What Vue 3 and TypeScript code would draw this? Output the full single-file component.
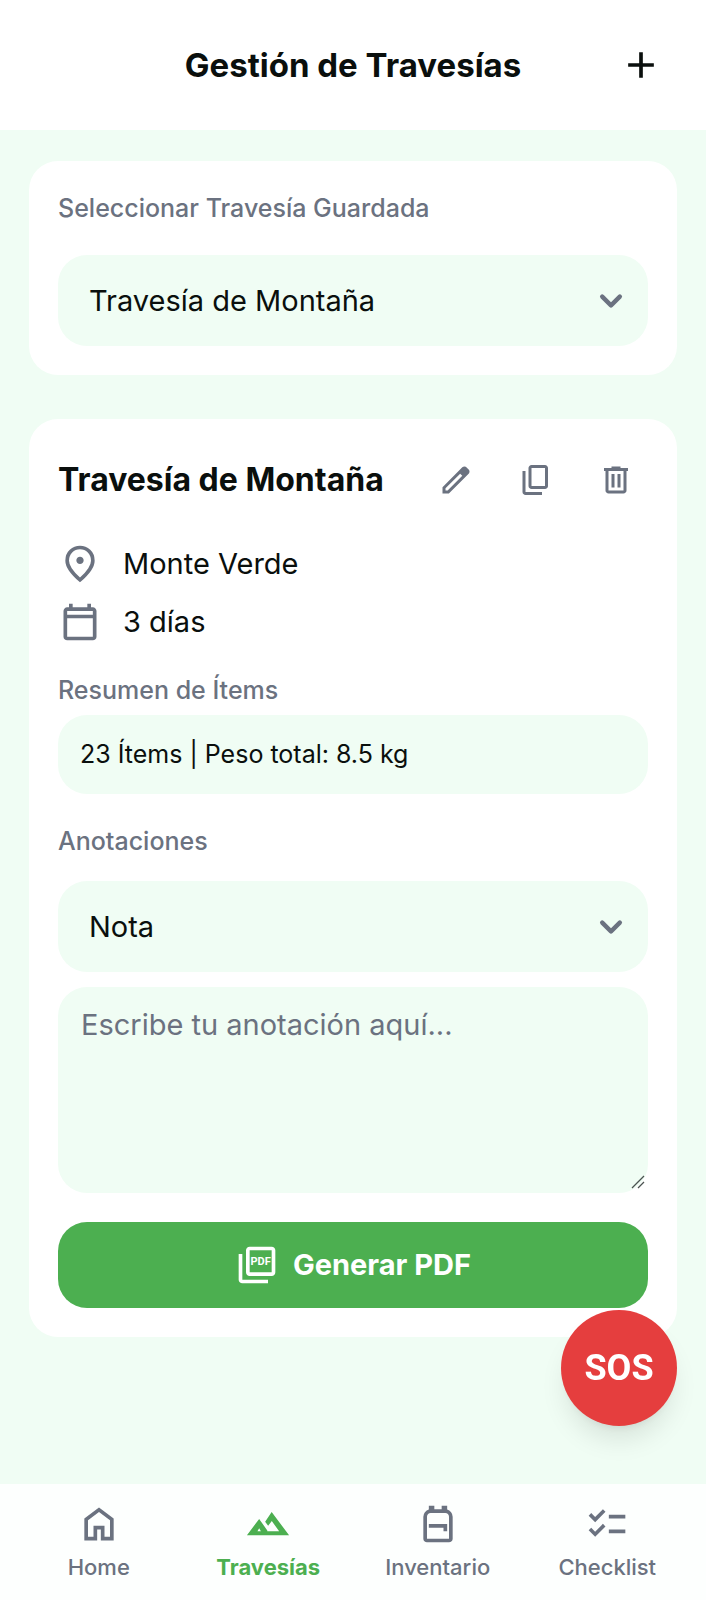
<script setup lang="ts">
import { ref } from 'vue'

interface NavItem {
  label: string
  active: boolean
  path: string
}

const trips: string[] = ['Travesía de Montaña', 'Travesía de Costa', 'Travesía de Bosque']
const noteTypes: string[] = ['Nota', 'Alerta', 'Recordatorio']

const selectedTrip = ref<string>(trips[0])
const noteType = ref<string>(noteTypes[0])
const note = ref<string>('')

const actions: { label: string; path: string }[] = [
  {
    label: 'Editar',
    path: 'M200-200h57l391-391-57-57-391 391v57Zm-80 80v-170l528-527q12-11 26.5-17t30.5-6q16 0 31 6t26 18l55 56q12 11 17.5 26t5.5 30q0 16-5.5 30.5T817-647L290-120H120Z',
  },
  {
    label: 'Duplicar',
    path: 'M360-240q-33 0-56.5-23.5T280-320v-480q0-33 23.5-56.5T360-880h360q33 0 56.5 23.5T800-800v480q0 33-23.5 56.5T720-240H360Zm0-80h360v-480H360v480ZM200-80q-33 0-56.5-23.5T120-160v-560h80v560h440v80H200Z',
  },
  {
    label: 'Eliminar',
    path: 'M280-120q-33 0-56.5-23.5T200-200v-520h-40v-80h200v-40h240v40h200v80h-40v520q0 33-23.5 56.5T680-120H280Zm400-600H280v520h400v-520ZM360-280h80v-360h-80v360Zm160 0h80v-360h-80v360Z',
  },
]

const navItems: NavItem[] = [
  {
    label: 'Home',
    active: false,
    path: 'M240-200h120v-240h240v240h120v-360L480-740 240-560v360Zm-80 80v-480l320-240 320 240v480H520v-240h-80v240H160Z',
  },
  {
    label: 'Travesías',
    active: true,
    path: 'M20-235 287-590 465-340V-320H723L563-545 483-440 418-531 560-740 940-235ZM250-320h75l-38-65Z',
  },
  {
    label: 'Inventario',
    active: false,
    path: 'M160-160v-480q0-56 34.5-98.5T280-794v-86h120v80h160v-80h120v86q51 13 85.5 55.5T800-640v480q0 33-23.5 56.5T720-80H240q-33 0-56.5-23.5T160-160Zm80 0h480v-480q0-33-23.5-56.5T640-720H320q-33 0-56.5 23.5T240-640v480Zm360-160h80v-160H280v80h320v80Z',
  },
  {
    label: 'Checklist',
    active: false,
    path: 'M222-200 80-342l56-56 85 85 170-170 56 57-225 226Zm0-320L80-662l56-56 85 85 170-170 56 57-225 226Zm298 240v-80h360v80H520Zm0-320v-80h360v80H520Z',
  },
]
</script>

<template>
  <div class="page">
    <header class="header">
      <h1 class="title">Gestión de Travesías</h1>
      <button class="add" type="button" aria-label="Nueva travesía">
        <svg class="icon" viewBox="0 -960 960 960" aria-hidden="true">
          <path d="M440-440H200v-80h240v-240h80v240h240v80H520v240h-80v-240Z" />
        </svg>
      </button>
    </header>

    <main class="main">
      <section class="card">
        <label class="label" for="trip">Seleccionar Travesía Guardada</label>
        <div class="field trip-select">
          <select id="trip" v-model="selectedTrip" class="select">
            <option v-for="t in trips" :key="t">{{ t }}</option>
          </select>
          <svg class="chevron" viewBox="0 0 20 20" aria-hidden="true">
            <path d="M5.293 7.293a1 1 0 011.414 0L10 10.586l3.293-3.293a1 1 0 111.414 1.414l-4 4a1 1 0 01-1.414 0l-4-4a1 1 0 010-1.414z" />
          </svg>
        </div>
      </section>

      <section class="card">
        <div class="trip-head">
          <h2 class="trip-title">{{ selectedTrip }}</h2>
          <div class="actions">
            <button v-for="a in actions" :key="a.label" class="action" type="button" :aria-label="a.label">
              <svg class="icon-small" viewBox="0 -960 960 960" aria-hidden="true"><path :d="a.path" /></svg>
            </button>
          </div>
        </div>

        <ul class="facts">
          <li class="fact">
            <svg class="icon muted" viewBox="0 -960 960 960" aria-hidden="true">
              <path d="M480-480q33 0 56.5-23.5T560-560q0-33-23.5-56.5T480-640q-33 0-56.5 23.5T400-560q0 33 23.5 56.5T480-480Zm0 294q122-112 181-203.5T720-552q0-109-69.5-178.5T480-800q-101 0-170.5 69.5T240-552q0 71 59 162.5T480-186Zm0 106Q319-217 239.5-334.5T160-552q0-150 96.5-239T480-880q127 0 223.5 89T800-552q0 100-79.5 217.5T480-80Z" />
            </svg>
            <span>Monte Verde</span>
          </li>
          <li class="fact">
            <svg class="icon muted" viewBox="0 -960 960 960" aria-hidden="true">
              <path d="M200-80q-33 0-56.5-23.5T120-160v-560q0-33 23.5-56.5T200-800h40v-80h80v80h320v-80h80v80h40q33 0 56.5 23.5T840-720v560q0 33-23.5 56.5T760-80H200Zm0-80h560v-400H200v400Zm0-480h560v-80H200v80Z" />
            </svg>
            <span>3 días</span>
          </li>
        </ul>

        <h3 class="label">Resumen de Ítems</h3>
        <p class="summary">23 Ítems | Peso total: 8.5 kg</p>

        <label class="label notes-label" for="note-type">Anotaciones</label>
        <div class="field">
          <select id="note-type" v-model="noteType" class="select">
            <option v-for="n in noteTypes" :key="n">{{ n }}</option>
          </select>
          <svg class="chevron" viewBox="0 0 20 20" aria-hidden="true">
            <path d="M5.293 7.293a1 1 0 011.414 0L10 10.586l3.293-3.293a1 1 0 111.414 1.414l-4 4a1 1 0 01-1.414 0l-4-4a1 1 0 010-1.414z" />
          </svg>
        </div>
        <div class="field note-field">
          <textarea v-model="note" class="note" aria-label="Anotación" placeholder="Escribe tu anotación aquí..."></textarea>
          <svg class="grip" viewBox="0 0 14 14" aria-hidden="true">
            <path d="M1 13 13 1M7 13l6-6" />
          </svg>
        </div>

        <button class="generate" type="button">
          <svg class="icon" viewBox="0 -960 960 960" aria-hidden="true">
            <path d="M320-240q-33 0-56.5-23.5T240-320v-480q0-33 23.5-56.5T320-880h480q33 0 56.5 23.5T880-800v480q0 33-23.5 56.5T800-240H320Zm0-80h480v-480H320v480ZM160-80q-33 0-56.5-23.5T80-160v-560h80v560h560v80H160Z" />
            <text class="pdf-mark" x="560" y="-470" text-anchor="middle">PDF</text>
          </svg>
          <span>Generar PDF</span>
        </button>
      </section>
    </main>

    <button class="sos" type="button">SOS</button>

    <nav class="nav">
      <a v-for="item in navItems" :key="item.label" href="#" class="nav-item" :class="{ active: item.active }">
        <svg class="icon" viewBox="0 -960 960 960" aria-hidden="true"><path :d="item.path" /></svg>
        <span>{{ item.label }}</span>
      </a>
    </nav>
  </div>
</template>

<style>
body {
  margin: 0;
  background: #f0fdf4;
}
</style>

<style scoped>
.page {
  display: flex;
  flex-direction: column;
  min-height: 100vh;
  background: #f0fdf4;
  color: #0a0f0d;
  font-family: Inter, 'Liberation Sans', sans-serif;
  font-size: 29px;
  line-height: 44px;
}

button,
select,
textarea {
  box-sizing: border-box;
  border: 0;
  margin: 0;
  font: inherit;
  color: inherit;
}

button {
  padding: 0;
  background: transparent;
  cursor: pointer;
}

svg {
  display: block;
  flex: none;
  fill: currentColor;
}

.icon {
  width: 44px;
  height: 44px;
}

.icon-small {
  width: 36px;
  height: 36px;
}

.muted {
  color: #6b7280;
}

.header {
  display: grid;
  grid-template-columns: 72px 1fr 72px;
  align-items: center;
  padding: 29px;
  background: #fff;
}

.title {
  grid-column: 2;
  margin: 0;
  text-align: center;
  font-size: 33px;
  line-height: 40px;
  font-weight: 700;
}

.add {
  display: grid;
  place-items: center;
  height: 72px;
}

.main {
  flex: 1;
  display: flex;
  flex-direction: column;
  gap: 44px;
  padding: 31px 29px 146px;
}

.card {
  display: flex;
  flex-direction: column;
  padding: 29px;
  border-radius: 29px;
  background: #fff;
}

.label {
  margin: 0;
  color: #6b7280;
  font-size: 25px;
  line-height: 36px;
  font-weight: 500;
}

.field {
  display: grid;
  align-items: center;
}

.trip-select {
  margin-top: 29px;
}

.select {
  grid-area: 1 / 1;
  width: 100%;
  height: 91px;
  padding: 0 60px 0 31px;
  border-radius: 29px;
  background: #f0fdf4;
  appearance: none;
}

.chevron {
  grid-area: 1 / 1;
  justify-self: end;
  width: 44px;
  height: 44px;
  margin-right: 15px;
  color: #6b7280;
  pointer-events: none;
}

.trip-head {
  display: flex;
  align-items: center;
  justify-content: space-between;
}

.trip-title {
  margin: 0;
  font-size: 32px;
  line-height: 40px;
  font-weight: 700;
}

.actions {
  display: flex;
  gap: 16px;
  color: #6b7280;
}

.action {
  display: grid;
  place-items: center;
  width: 64px;
  height: 64px;
}

.facts {
  display: flex;
  flex-direction: column;
  gap: 14px;
  margin: 30px 0 28px;
  padding: 0;
  list-style: none;
}

.fact {
  display: flex;
  align-items: center;
  gap: 21px;
}

.summary {
  margin: 7px 0 29px;
  padding: 21px 22px;
  border-radius: 29px;
  background: #f0fdf4;
  font-size: 25px;
  line-height: 37px;
}

.notes-label {
  margin-bottom: 22px;
}

.note-field {
  margin: 15px 0 29px;
}

.note {
  grid-area: 1 / 1;
  display: block;
  width: 100%;
  height: 206px;
  padding: 16px 23px;
  border-radius: 29px;
  background: #f0fdf4;
  resize: vertical;
}

.note::-webkit-resizer {
  background: transparent;
}

.note::placeholder {
  color: #6b7280;
  opacity: 1;
}

.grip {
  grid-area: 1 / 1;
  place-self: end;
  width: 14px;
  height: 14px;
  margin: 0 3px 4px 0;
  fill: none;
  stroke: #4b5350;
  stroke-width: 1.3;
  pointer-events: none;
}

.generate {
  display: flex;
  align-items: center;
  justify-content: center;
  gap: 14px;
  padding: 21px;
  border-radius: 29px;
  background: #4caf50;
  color: #fff;
  font-weight: 700;
}

.pdf-mark {
  font-family: Roboto, 'Liberation Sans', sans-serif;
  font-size: 240px;
  font-weight: 700;
}

.sos {
  position: fixed;
  right: 29px;
  bottom: 174px;
  width: 116px;
  height: 116px;
  border-radius: 50%;
  background: #e53e3e;
  color: #fff;
  font-family: Roboto, 'Liberation Sans', sans-serif;
  font-size: 36px;
  font-weight: 700;
  box-shadow: 0 18px 27px -5px rgba(0, 0, 0, 0.1), 0 7px 11px -7px rgba(0, 0, 0, 0.1);
}

.nav {
  position: sticky;
  bottom: 0;
  display: grid;
  grid-template-columns: repeat(4, 1fr);
  padding: 18px 14px 17px;
  background: #fdfffe;
}

.nav-item {
  display: flex;
  flex-direction: column;
  align-items: center;
  gap: 5px;
  color: #6b7280;
  font-size: 22px;
  line-height: 32px;
  font-weight: 500;
  text-decoration: none;
}

.active {
  color: #4caf50;
  font-weight: 700;
}
</style>
